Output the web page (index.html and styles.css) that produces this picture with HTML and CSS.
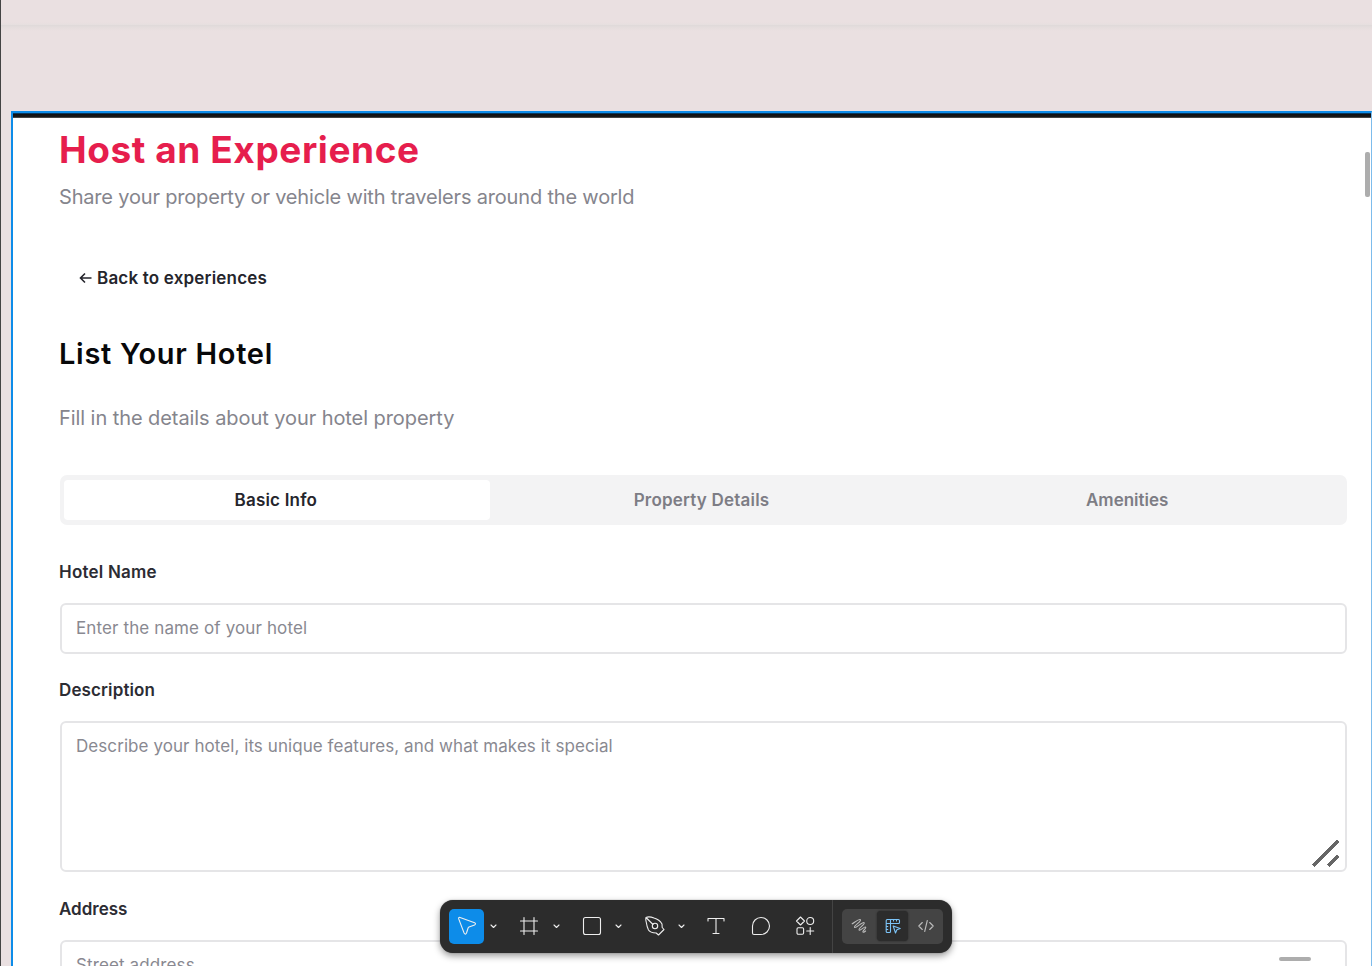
FILE: index.html
```html
<!DOCTYPE html>
<html lang="en">
<head>
<meta charset="utf-8">
<title>Host an Experience</title>
<link rel="stylesheet" href="styles.css">
</head>
<body>
<div class="canvas">
  <div class="canvas-strip"></div>
  <main class="frame">
    <div class="frame-bar"></div>
    <div class="content">
      <h1 class="title"><span>Host an Experience</span></h1>
      <p class="lead"><span>Share your property or vehicle with travelers around the world</span></p>
      <div class="back"><svg class="arrow" viewBox="0 0 13 12"><path d="M12.5 6H1.5M6 1.5L1.5 6L6 10.500"/></svg><span>Back to experiences</span></div>
      <h2 class="subtitle"><span>List Your Hotel</span></h2>
      <p class="hint"><span>Fill in the details about your hotel property</span></p>
      <div class="tabs">
        <div class="tab tab-active"><span>Basic Info</span></div>
        <div class="tab"><span>Property Details</span></div>
        <div class="tab tab-last"><span>Amenities</span></div>
      </div>
      <div class="label label-name"><span>Hotel Name</span></div>
      <div class="field"><span>Enter the name of your hotel</span></div>
      <div class="label label-desc"><span>Description</span></div>
      <div class="field area"><span>Describe your hotel, its unique features, and what makes it special</span>
        <svg class="grip" viewBox="0 0 30 30" shape-rendering="crispEdges"><path d="M2 27L27 2M17 27L27 17"/></svg>
      </div>
      <div class="label label-addr"><span>Address</span></div>
      <div class="field"><span>Street address</span></div>
    </div>
    <div class="scroll-v"></div>
    <div class="scroll-h"></div>
  </main>
  <nav class="toolbar">
    <div class="tool tool-active"><svg width="20" height="20" viewBox="0 0 20 20"><path d="M1.700 2.900Q1.200 1 3.100 1.500L17.600 6.800Q19.500 7.800 17.600 8.900L12 11Q11.400 11.300 11.100 12L9.500 17Q8.400 19.300 7.100 17Z"/></svg></div>
    <svg class="chev" viewBox="0 0 7 5"><path d="M1 1L3.500 3.500L6 1"/></svg>
    <svg class="ic i-frame" viewBox="0 0 20 20"><path d="M5 1.500V18.500M15 1.500V18.500M1.500 5H18.500M1.500 15H18.500"/></svg>
    <svg class="chev c2" viewBox="0 0 7 5"><path d="M1 1L3.500 3.500L6 1"/></svg>
    <svg class="ic i-rect" viewBox="0 0 20 20"><rect x="1.500" y="1.500" width="17" height="17" rx="2"/></svg>
    <svg class="chev c3" viewBox="0 0 7 5"><path d="M1 1L3.500 3.500L6 1"/></svg>
    <svg class="ic i-pen" viewBox="0 0 20 20"><path d="M1 1.500Q4 0 9 2Q14.500 3.500 17 8L17.200 11.500L19 13.500L13.500 19L11.200 17Q5 16.800 3.500 14Q2 11 1.200 6Q.5 3 1 1.500L8 8.500"/><circle cx="10" cy="10" r="2.700"/></svg>
    <svg class="chev c4" viewBox="0 0 7 5"><path d="M1 1L3.500 3.500L6 1"/></svg>
    <svg class="ic i-text" viewBox="0 0 20 20"><path d="M2 5V2.500H18V5M10 2.500V17.500M7 17.500H13"/></svg>
    <svg class="ic i-talk" viewBox="0 0 20 20"><path d="M1.500 10A8.500 8.500 0 1 1 10 18.500H3Q1.500 18.500 1.500 17Z"/></svg>
    <svg class="ic i-comp" viewBox="0 0 20 20"><path d="M5.500 1L9.500 5L5.500 9L1.500 5ZM15.200 11.500V18.500M11.700 15H18.700"/><circle cx="15.200" cy="5" r="3.500"/><rect x="2" y="11.700" width="6.600" height="6.600" rx="1.200"/></svg>
    <div class="divider"></div>
    <div class="modes">
      <div class="mode mode-draw"><svg width="16" height="16" viewBox="0 0 16 16"><path d="M1.200 5.800C4 4.200 8 .4 9.400 1.600C10.800 3 2.300 8.200 3.600 9.500C4.900 10.700 11.700 3.200 13.100 4.600C14.500 6 6.900 10.700 8.100 12C9.300 13.200 13.400 8.100 14.600 9.200C15.700 10.400 10.900 13 12 14.100Q12.900 14.700 14.600 13"/></svg></div>
      <div class="mode mode-active"><svg width="16" height="16" viewBox="0 0 16 16"><path d="M2.200 1.500H13.500Q14.500 1.500 14.500 2.500V4.500Q14.500 5.500 13.500 5.500H5.500V13.500Q5.500 14.500 4.500 14.500H2.200Q1.200 14.500 1.200 13.500V2.500Q1.200 1.500 2.200 1.500ZM5.500 1.500V5.500H1.200M8.500 1.500V3M11.500 1.500V3M1.200 8.500H2.800M1.200 11.500H2.800M8.200 8L15.200 10.500L11.900 11.800L10.500 15Z"/></svg></div>
      <div class="mode"><svg width="16" height="16" viewBox="0 0 16 16"><path d="M4.300 4.500L.8 8L4.300 11.500M11.700 4.500L15.200 8L11.700 11.500M9.300 2.500L6.700 13.500"/></svg></div>
    </div>
  </nav>
</div>
</body>
</html>
```
FILE: styles.css
```css
* { box-sizing: border-box; }
body { margin: 0; overflow: hidden; font-family: Inter, "Liberation Sans", sans-serif; }
svg { display: block; fill: none; flex: none; }
.canvas { position: relative; width: 1372px; height: 966px; overflow: hidden; background: #eae0e1; border-left: 1px solid #444; }
.canvas-strip { height: 31px; background: linear-gradient(#eae0e1 22px, #e6dfdf 25px, #dfd9d9 25px, #e4dddd 27px, #eae0e1 31px); }
.frame { position: absolute; left: 10px; top: 111px; width: 1361px; height: 870px; background: #fff; border: 2px solid #0d8ce9; border-right: 1px solid #7dbcec; }
.frame-bar { height: 5px; background: linear-gradient(#07365b 1px, #0d0f12 1px, #191919 4px, #444 4px); }
.content { padding: 0 24px 0 46px; }
h1, h2, p { margin: 0; }
.title, .lead, .back, .subtitle, .hint, .label { display: flex; align-items: center; white-space: nowrap; }
.title { height: 64px; padding-bottom: 2px; font-size: 37px; font-weight: 700; color: #e61e4d; letter-spacing: .58px; }
.lead { height: 30px; font-size: 20px; color: #85858d; letter-spacing: -.18px; }
.back { height: 36px; margin: 48px 0 0 20px; gap: 5px; font-size: 17px; font-weight: 600; color: #25252c; letter-spacing: .19px; }
.arrow { width: 13px; height: 12px; stroke: #25252c; stroke-width: 1.6; }
.subtitle { height: 40px; margin-top: 37px; font-size: 29px; font-weight: 600; color: #08080a; letter-spacing: .7px; }
.hint { height: 30px; margin-top: 30px; font-size: 20px; color: #85858d; letter-spacing: -.07px; }
.tabs { display: flex; height: 50px; margin: 42px 0 0 1px; padding: 5px 4px; border-radius: 7px; background: #f3f3f4; }
.tab { flex: 1; display: flex; align-items: center; justify-content: center; padding: 0 2px 1px 0; font-size: 17px; font-weight: 600; color: #7d7d85; letter-spacing: .2px; }
.tab-active { background: #fff; color: #25252c; border-radius: 4px; }
.tab-last { padding-right: 4px; letter-spacing: 0; }
.label { height: 24px; font-size: 17px; font-weight: 600; color: #2c2c33; letter-spacing: .12px; }
.label-name { margin-top: 35px; letter-spacing: .22px; }
.label-desc { margin-top: 24px; }
.label-addr { margin-top: 25px; letter-spacing: 0; }
.field { position: relative; height: 51px; margin: 19px 0 0 1px; padding: 11px 14px; border: 2px solid #e5e5e7; border-radius: 6px; font-size: 17px; line-height: 24px; color: #898991; white-space: nowrap; letter-spacing: .12px; }
.area { height: 151px; letter-spacing: .07px; }
.grip { position: absolute; right: 4px; bottom: 1px; width: 30px; height: 30px; stroke: #666; stroke-width: 3.5; }
.scroll-v { position: absolute; right: 1px; top: 39px; width: 5px; height: 45px; border-radius: 2px; background: #adadad; }
.scroll-h { position: absolute; right: 60px; top: 844px; width: 32px; height: 4px; border-radius: 3px; background: #adadad; }
.toolbar { position: absolute; left: 439px; top: 900px; width: 512px; height: 53px; padding: 0 0 1px 9px; display: flex; align-items: center; border-radius: 13px; background: #2c2c2c; box-shadow: 0 0 1px #0008, 0 3px 7px #0006; stroke: #eee; stroke-width: 1.1; stroke-linejoin: round; stroke-linecap: round; }
.tool { width: 35px; height: 35px; display: flex; align-items: center; justify-content: center; }
.tool-active { background: #0d8ce9; border-radius: 5px; }
.chev { width: 7px; height: 5px; margin-left: 6px; }
.ic { width: 20px; height: 20px; }
.i-frame { margin-left: 22px; }
.c2 { margin-left: 14px; }
.i-rect { margin-left: 22px; }
.c3 { margin-left: 13px; }
.i-pen { margin-left: 23px; }
.c4 { margin-left: 13px; }
.i-text { margin-left: 21px; }
.i-talk { margin-left: 25px; }
.i-comp { margin-left: 24px; }
.divider { width: 1px; height: 53px; margin: 0 0 -1px 17px; background: #444; }
.modes { display: flex; align-items: center; width: 101px; height: 35px; margin-left: 9px; border-radius: 5px; background: #444; stroke: #bbb; }
.mode { flex: 1; height: 30px; display: flex; align-items: center; justify-content: center; }
.mode-draw { flex: 0 0 35px; padding-right: 1px; }
.mode-active { flex: 0 0 31px; border-radius: 4px; background: #2c2c2c; stroke: #7cc4f8; box-shadow: 0 0 2px #222; }
```
